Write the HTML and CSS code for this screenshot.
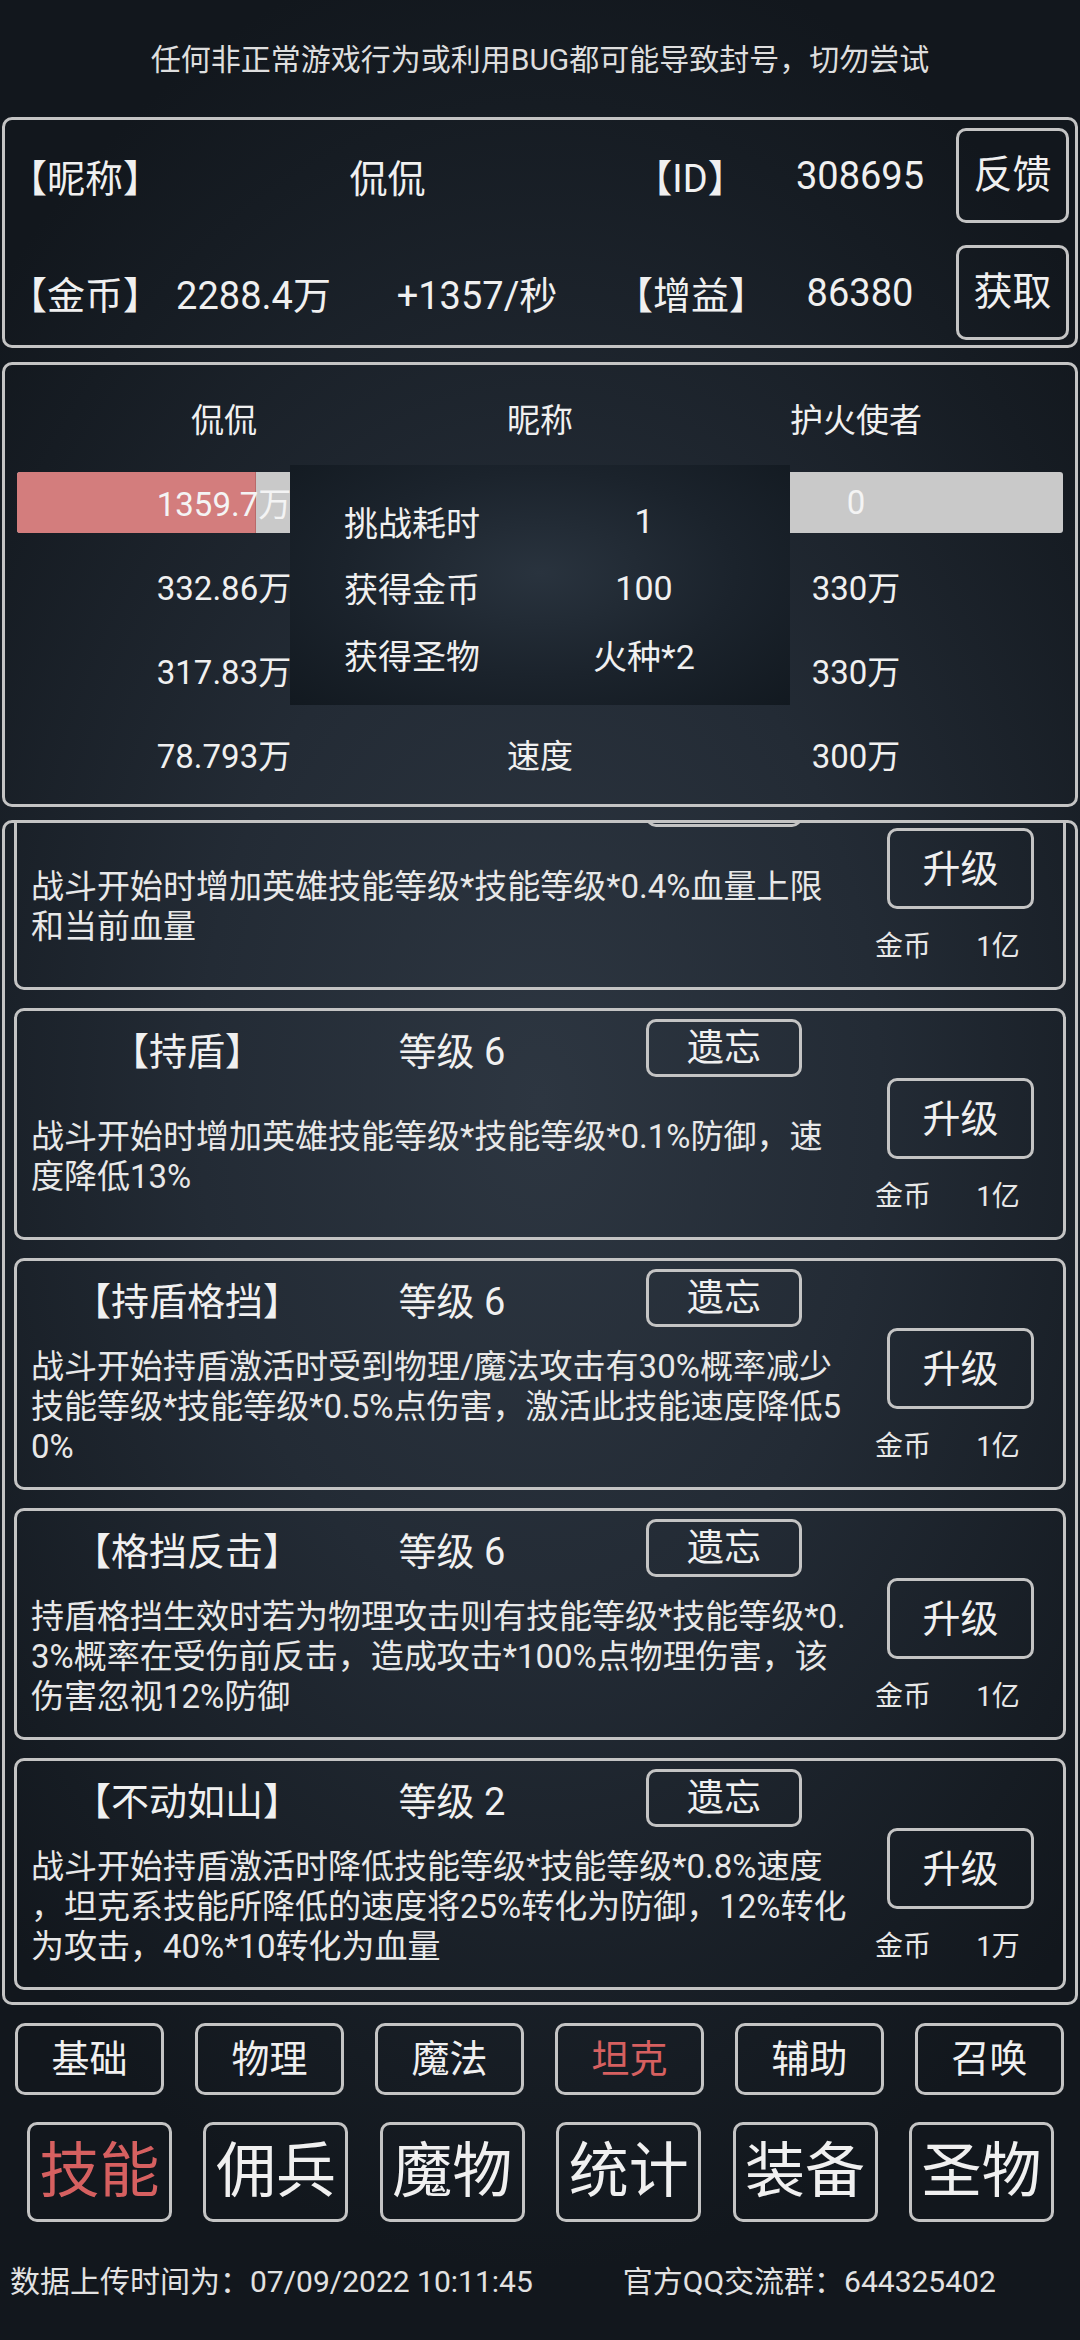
FILE: index.html
```html
<!DOCTYPE html>
<html lang="zh-CN">
<head>
  <meta charset="UTF-8">
  <meta name="viewport" content="width=device-width, initial-scale=1.0">
  <title>技能</title>
  <link rel="stylesheet" href="styles.css">
</head>
<body>
  <p class="notice">任何非正常游戏行为或利用BUG都可能导致封号，切勿尝试</p>

  <!-- player info -->
  <section class="panel profile">
    <div class="profile-rows">
      <div class="profile-row row-id">
        <span>【昵称】</span>
        <span>侃侃</span>
        <span>【ID】</span>
        <span>308695</span>
      </div>
      <div class="profile-row row-gold">
        <span>【金币】</span>
        <span>2288.4万</span>
        <span>+1357/秒</span>
        <span>【增益】</span>
        <span>86380</span>
      </div>
    </div>
    <div class="profile-btns">
      <button class="btn btn-side">反馈</button>
      <button class="btn btn-side">获取</button>
    </div>
  </section>

  <!-- battle compare -->
  <section class="panel battle">
    <div class="b-row">
      <span>侃侃</span><span>昵称</span><span>护火使者</span>
    </div>
    <div class="b-row">
      <div class="hp">
        <div class="hp-fill" style="width: 57.7%"></div>
        <span class="hp-text">1359.7万</span>
      </div>
      <span>血量</span>
      <div class="hp">
        <span class="hp-text">0</span>
      </div>
    </div>
    <div class="b-row">
      <span>332.86万</span><span>攻击</span><span>330万</span>
    </div>
    <div class="b-row">
      <span>317.83万</span><span>防御</span><span>330万</span>
    </div>
    <div class="b-row">
      <span>78.793万</span><span>速度</span><span>300万</span>
    </div>

    <div class="result">
      <div class="result-row"><span>挑战耗时</span><span class="result-val">1</span></div>
      <div class="result-row"><span>获得金币</span><span class="result-val">100</span></div>
      <div class="result-row"><span>获得圣物</span><span class="result-val">火种*2</span></div>
    </div>
  </section>

  <!-- skill list (scrolled down a little) -->
  <section class="panel skills">
    <div class="skill-list">
      <div class="skill">
        <div class="skill-main">
          <div class="skill-head">
            <span class="skill-name"></span>
            <span class="skill-lv"></span>
            <button class="btn btn-forget"></button>
          </div>
          <div class="skill-desc">
            <p>战斗开始时增加英雄技能等级*技能等级*0.4%血量上限<br>和当前血量</p>
          </div>
        </div>
        <div class="skill-side">
          <button class="btn btn-up">升级</button>
          <div class="cost"><span>金币</span><span>1亿</span></div>
        </div>
      </div>

      <div class="skill">
        <div class="skill-main">
          <div class="skill-head">
            <span class="skill-name">【持盾】</span>
            <span class="skill-lv">等级 6</span>
            <button class="btn btn-forget">遗忘</button>
          </div>
          <div class="skill-desc">
            <p>战斗开始时增加英雄技能等级*技能等级*0.1%防御，速<br>度降低13%</p>
          </div>
        </div>
        <div class="skill-side">
          <button class="btn btn-up">升级</button>
          <div class="cost"><span>金币</span><span>1亿</span></div>
        </div>
      </div>

      <div class="skill">
        <div class="skill-main">
          <div class="skill-head">
            <span class="skill-name">【持盾格挡】</span>
            <span class="skill-lv">等级 6</span>
            <button class="btn btn-forget">遗忘</button>
          </div>
          <div class="skill-desc">
            <p>战斗开始持盾激活时受到物理/魔法攻击有30%概率减少<br>技能等级*技能等级*0.5%点伤害，激活此技能速度降低5<br>0%</p>
          </div>
        </div>
        <div class="skill-side">
          <button class="btn btn-up">升级</button>
          <div class="cost"><span>金币</span><span>1亿</span></div>
        </div>
      </div>

      <div class="skill">
        <div class="skill-main">
          <div class="skill-head">
            <span class="skill-name">【格挡反击】</span>
            <span class="skill-lv">等级 6</span>
            <button class="btn btn-forget">遗忘</button>
          </div>
          <div class="skill-desc">
            <p>持盾格挡生效时若为物理攻击则有技能等级*技能等级*0.<br>3%概率在受伤前反击，造成攻击*100%点物理伤害，该<br>伤害忽视12%防御</p>
          </div>
        </div>
        <div class="skill-side">
          <button class="btn btn-up">升级</button>
          <div class="cost"><span>金币</span><span>1亿</span></div>
        </div>
      </div>

      <div class="skill">
        <div class="skill-main">
          <div class="skill-head">
            <span class="skill-name">【不动如山】</span>
            <span class="skill-lv">等级 2</span>
            <button class="btn btn-forget">遗忘</button>
          </div>
          <div class="skill-desc">
            <p>战斗开始持盾激活时降低技能等级*技能等级*0.8%速度<br>，坦克系技能所降低的速度将25%转化为防御，12%转化<br>为攻击，40%*10转化为血量</p>
          </div>
        </div>
        <div class="skill-side">
          <button class="btn btn-up">升级</button>
          <div class="cost"><span>金币</span><span>1万</span></div>
        </div>
      </div>
    </div>
  </section>

  <nav class="cats">
    <button class="btn tab">基础</button>
    <button class="btn tab">物理</button>
    <button class="btn tab">魔法</button>
    <button class="btn tab active">坦克</button>
    <button class="btn tab">辅助</button>
    <button class="btn tab">召唤</button>
  </nav>

  <nav class="menu">
    <button class="btn tab-big active">技能</button>
    <button class="btn tab-big">佣兵</button>
    <button class="btn tab-big">魔物</button>
    <button class="btn tab-big">统计</button>
    <button class="btn tab-big">装备</button>
    <button class="btn tab-big">圣物</button>
  </nav>

  <footer class="foot">
    <span>数据上传时间为：07/09/2022 10:11:45</span>
    <span class="qq">官方QQ交流群：644325402</span>
  </footer>
</body>
</html>
```

FILE: styles.css
```css
* {
  margin: 0;
  padding: 0;
  box-sizing: border-box;
}

body {
  width: 1080px;
  height: 2340px;
  overflow: hidden;
  font-family: Roboto, "Noto Sans CJK SC", sans-serif;
  color: #f0f0f0;
  background: radial-gradient(ellipse 70% 50% at 50% 47%, #2d3641 0%, #232b35 45%, #161c23 85%, #12171d 100%);
}

.notice {
  padding-top: 40px;
  height: 117px;
  font-size: 30px;
  line-height: 40px;
  text-align: center;
  color: #dedede;
}

/* bordered boxes */
.panel {
  margin: 0 2px;
  border: 3px solid #c4c4c4;
  border-radius: 10px;
}

.btn {
  font-family: inherit;
  color: #f0f0f0;
  background: transparent;
  border: 3px solid #c4c4c4;
  border-radius: 10px;
  display: flex;
  align-items: center;
  justify-content: center;
  line-height: 1;
}

/* player info */
.profile {
  height: 231px;
  display: flex;
  font-size: 38px;
}

.profile-rows {
  width: 945px;
  padding-top: 8px;
  display: flex;
  flex-direction: column;
  gap: 22px;
}

.profile-row {
  height: 95px;
  display: grid;
  align-items: center;
  text-align: center;
  white-space: nowrap;
}

.row-id {
  grid-template-columns: 160px 445px 160px 180px;
}

.row-gold {
  grid-template-columns: 160px 177px 270px 158px 180px;
}

.profile-btns {
  margin-left: 6px;
  padding-top: 8px;
  display: flex;
  flex-direction: column;
  gap: 22px;
}

.btn-side {
  width: 113px;
  height: 95px;
  font-size: 39px;
}

/* battle compare */
.battle {
  position: relative;
  margin-top: 14px;
  height: 445px;
  padding: 11px 11px 0 12px;
  font-size: 33px;
}

.b-row {
  height: 84px;
  display: grid;
  grid-template-columns: 414px 218px 414px;
  align-items: center;
  text-align: center;
  white-space: nowrap;
}

.hp {
  position: relative;
  height: 61px;
  background: #c9c9c9;
  border-radius: 3px;
  display: flex;
  align-items: center;
  justify-content: center;
  overflow: hidden;
}

.hp-fill {
  position: absolute;
  left: 0;
  top: 0;
  bottom: 0;
  background: #d37d7d;
  border-right: 1px solid #b86a6a;
}

.hp-text {
  position: relative;
  color: #f4f4f4;
}

.result {
  position: absolute;
  left: 285px;
  top: 100px;
  width: 500px;
  height: 240px;
  padding: 23px 0 0 54px;
  font-size: 34px;
  background: radial-gradient(ellipse at 50% 45%, #29333e 0%, #1b232c 55%, #121920 100%);
}

.result-row {
  height: 66.5px;
  display: grid;
  grid-template-columns: 200px 200px;
  align-items: center;
  white-space: nowrap;
}

.result-val {
  text-align: center;
}

/* skill list */
.skills {
  margin-top: 13px;
  height: 1185px;
  overflow: hidden;
}

.skill-list {
  margin-top: -65px;
  padding: 0 9px;
  display: flex;
  flex-direction: column;
  gap: 18px;
}

.skill {
  height: 232px;
  flex-shrink: 0;
  border: 3px solid #c4c4c4;
  border-radius: 10px;
  display: flex;
}

.skill-main {
  width: 841px;
  padding-top: 8px;
  display: flex;
  flex-direction: column;
}

.skill-head {
  height: 58px;
  display: flex;
  align-items: center;
  font-size: 38px;
  white-space: nowrap;
}

.skill-name {
  width: 340px;
  text-align: center;
}

.skill-lv {
  width: 190px;
  text-align: center;
}

.btn-forget {
  margin-left: 99px;
  width: 156px;
  height: 58px;
  font-size: 37px;
}

.skill-desc {
  flex: 1;
  display: flex;
  align-items: center;
  padding-left: 14px;
  font-size: 33px;
  line-height: 40px;
  color: #e8e8e8;
  white-space: nowrap;
}

.skill-side {
  flex: 1;
  padding-top: 67px;
  display: flex;
  flex-direction: column;
  align-items: center;
}

.btn-up {
  width: 147px;
  height: 81px;
  font-size: 38px;
}

.cost {
  margin-top: 20px;
  padding-right: 26px;
  display: flex;
  gap: 45px;
  font-size: 28px;
  line-height: 36px;
  color: #e8e8e8;
}

/* category tabs */
.cats {
  margin-top: 18px;
  padding: 0 16px 0 15px;
  display: flex;
  justify-content: space-between;
}

.tab {
  width: 149px;
  height: 72px;
  font-size: 38px;
}

.menu {
  margin-top: 27px;
  padding: 0 26px 0 27px;
  display: flex;
  justify-content: space-between;
}

.tab-big {
  width: 145px;
  height: 100px;
  font-size: 60px;
}

.active {
  color: #d66060;
}

.foot {
  margin-top: 40px;
  padding-left: 10px;
  display: flex;
  font-size: 30px;
  line-height: 40px;
  color: #e2e2e2;
  white-space: nowrap;
}

.qq {
  margin-left: 90px;
}
```
